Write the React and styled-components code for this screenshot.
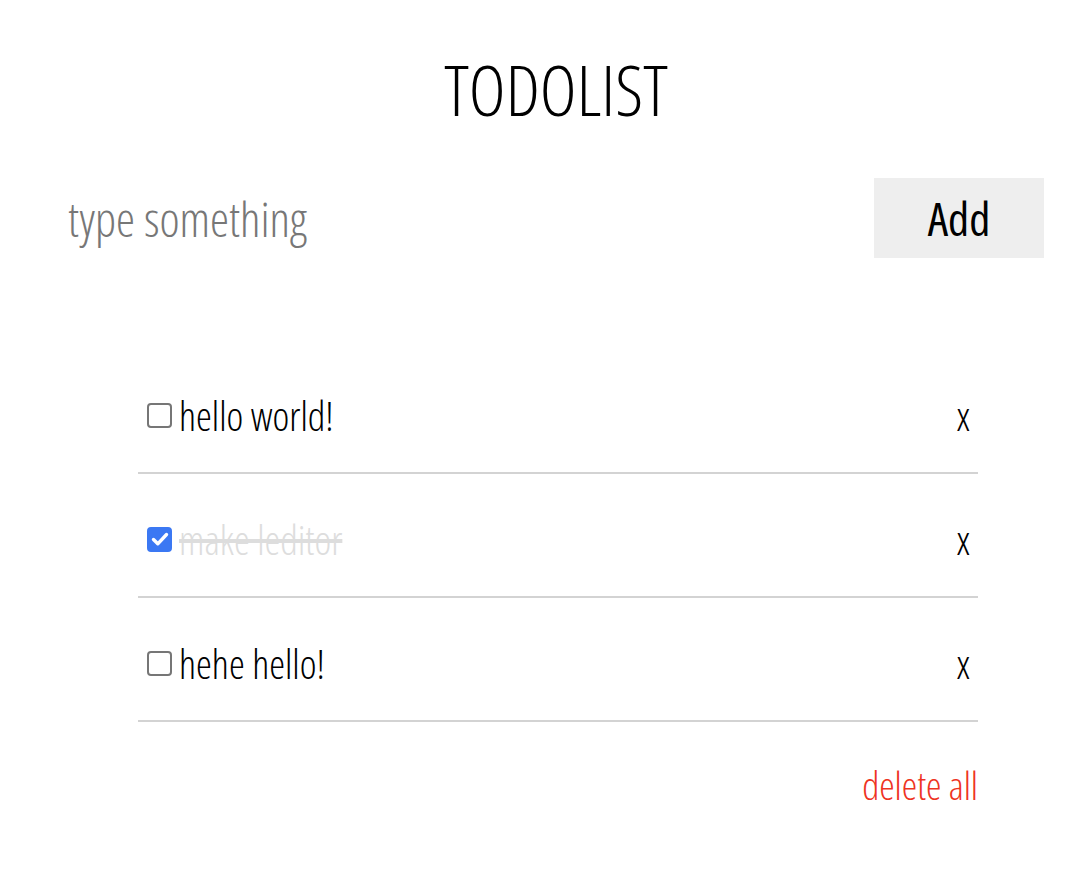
import React, { useState } from 'react';
import styled, { createGlobalStyle } from 'styled-components';

const GlobalStyle = createGlobalStyle`
  body {
    margin: 0;
    background: #fff;
    font-family: "Open Sans", "Noto Sans", sans-serif;
    font-stretch: 75%;
  }
`;

const Page = styled.div`
  width: 976px;
  padding: 44px 0 40px 68px;
`;

const Title = styled.h1`
  margin: 0;
  text-align: center;
  font-size: 70px;
  font-weight: 340;
  line-height: 90px;
  color: #000;
`;

const InputRow = styled.form`
  display: flex;
  align-items: center;
  justify-content: space-between;
  margin-top: 44px;
  height: 80px;
`;

const TextInput = styled.input`
  flex: 1;
  border: none;
  outline: none;
  padding: 0;
  font-family: inherit;
  font-stretch: 75%;
  font-size: 48px;
  font-weight: 300;
  color: #000;
  background: transparent;

  &::placeholder {
    color: #777;
  }
`;

const AddButton = styled.button`
  width: 170px;
  height: 80px;
  border: none;
  background: #eee;
  font-family: inherit;
  font-stretch: 75%;
  font-size: 46px;
  font-weight: 400;
  color: #000;
  cursor: pointer;
`;

const List = styled.ul`
  list-style: none;
  margin: 92px 66px 0 70px;
  padding: 0;
`;

const Item = styled.li`
  box-sizing: border-box;
  display: flex;
  align-items: center;
  height: 124px;
  padding: 8px 8px 0 9px;
  border-bottom: 2px solid #d3d3d3;
`;

const CheckWrap = styled.label`
  position: relative;
  display: flex;
  margin-right: 7px;
  cursor: pointer;
`;

const HiddenInput = styled.input`
  position: absolute;
  opacity: 0;
  width: 0;
  height: 0;
  margin: 0;
`;

const Box = styled.span`
  box-sizing: border-box;
  display: flex;
  align-items: center;
  justify-content: center;
  width: 25px;
  height: 25px;
  border-radius: 4px;
  border: 2px solid ${p => (p.$checked ? '#3b78f3' : '#767676')};
  background: ${p => (p.$checked ? '#3b78f3' : '#fff')};
`;

const Label = styled.span`
  flex: 1;
  font-size: 40px;
  font-weight: 340;
  color: ${p => (p.$done ? '#ddd' : '#000')};
  text-decoration: ${p => (p.$done ? 'line-through' : 'none')};
`;

const Remove = styled.button`
  border: none;
  background: none;
  padding: 0;
  font-family: inherit;
  font-stretch: 75%;
  font-size: 40px;
  font-weight: 300;
  color: #000;
  cursor: pointer;
`;

const Footer = styled.div`
  display: flex;
  justify-content: flex-end;
  margin: 36px 66px 0 0;
`;

const DeleteAll = styled.button`
  border: none;
  background: none;
  padding: 0;
  font-family: inherit;
  font-stretch: 75%;
  font-size: 39px;
  font-weight: 300;
  color: #ee3322;
  cursor: pointer;
`;

function Checkbox({ checked, onChange }) {
  return (
    <CheckWrap>
      <HiddenInput type="checkbox" checked={checked} onChange={onChange} />
      <Box $checked={checked}>
        {checked && (
          <svg width="20" height="20" viewBox="0 0 20 20">
            <path d="M3.5 10.5l4.3 4.3L16.5 5.5" fill="none" stroke="#fff" strokeWidth="3.4" strokeLinecap="round" strokeLinejoin="round" />
          </svg>
        )}
      </Box>
    </CheckWrap>
  );
}

const initialTodos = [
  { id: 1, text: 'hello world!', done: false },
  { id: 2, text: 'make leditor', done: true },
  { id: 3, text: 'hehe hello!', done: false },
];

export default function App() {
  const [todos, setTodos] = useState(initialTodos);

  const toggle = id =>
    setTodos(todos.map(t => (t.id === id ? { ...t, done: !t.done } : t)));

  return (
    <Page>
      <GlobalStyle />
      <Title>TODOLIST</Title>
      <InputRow onSubmit={e => e.preventDefault()}>
        <TextInput placeholder="type something" />
        <AddButton type="submit">Add</AddButton>
      </InputRow>
      <List>
        {todos.map(t => (
          <Item key={t.id}>
            <Checkbox checked={t.done} onChange={() => toggle(t.id)} />
            <Label $done={t.done}>{t.text}</Label>
            <Remove onClick={() => setTodos(todos.filter(x => x.id !== t.id))}>x</Remove>
          </Item>
        ))}
      </List>
      <Footer>
        <DeleteAll onClick={() => setTodos([])}>delete all</DeleteAll>
      </Footer>
    </Page>
  );
}
